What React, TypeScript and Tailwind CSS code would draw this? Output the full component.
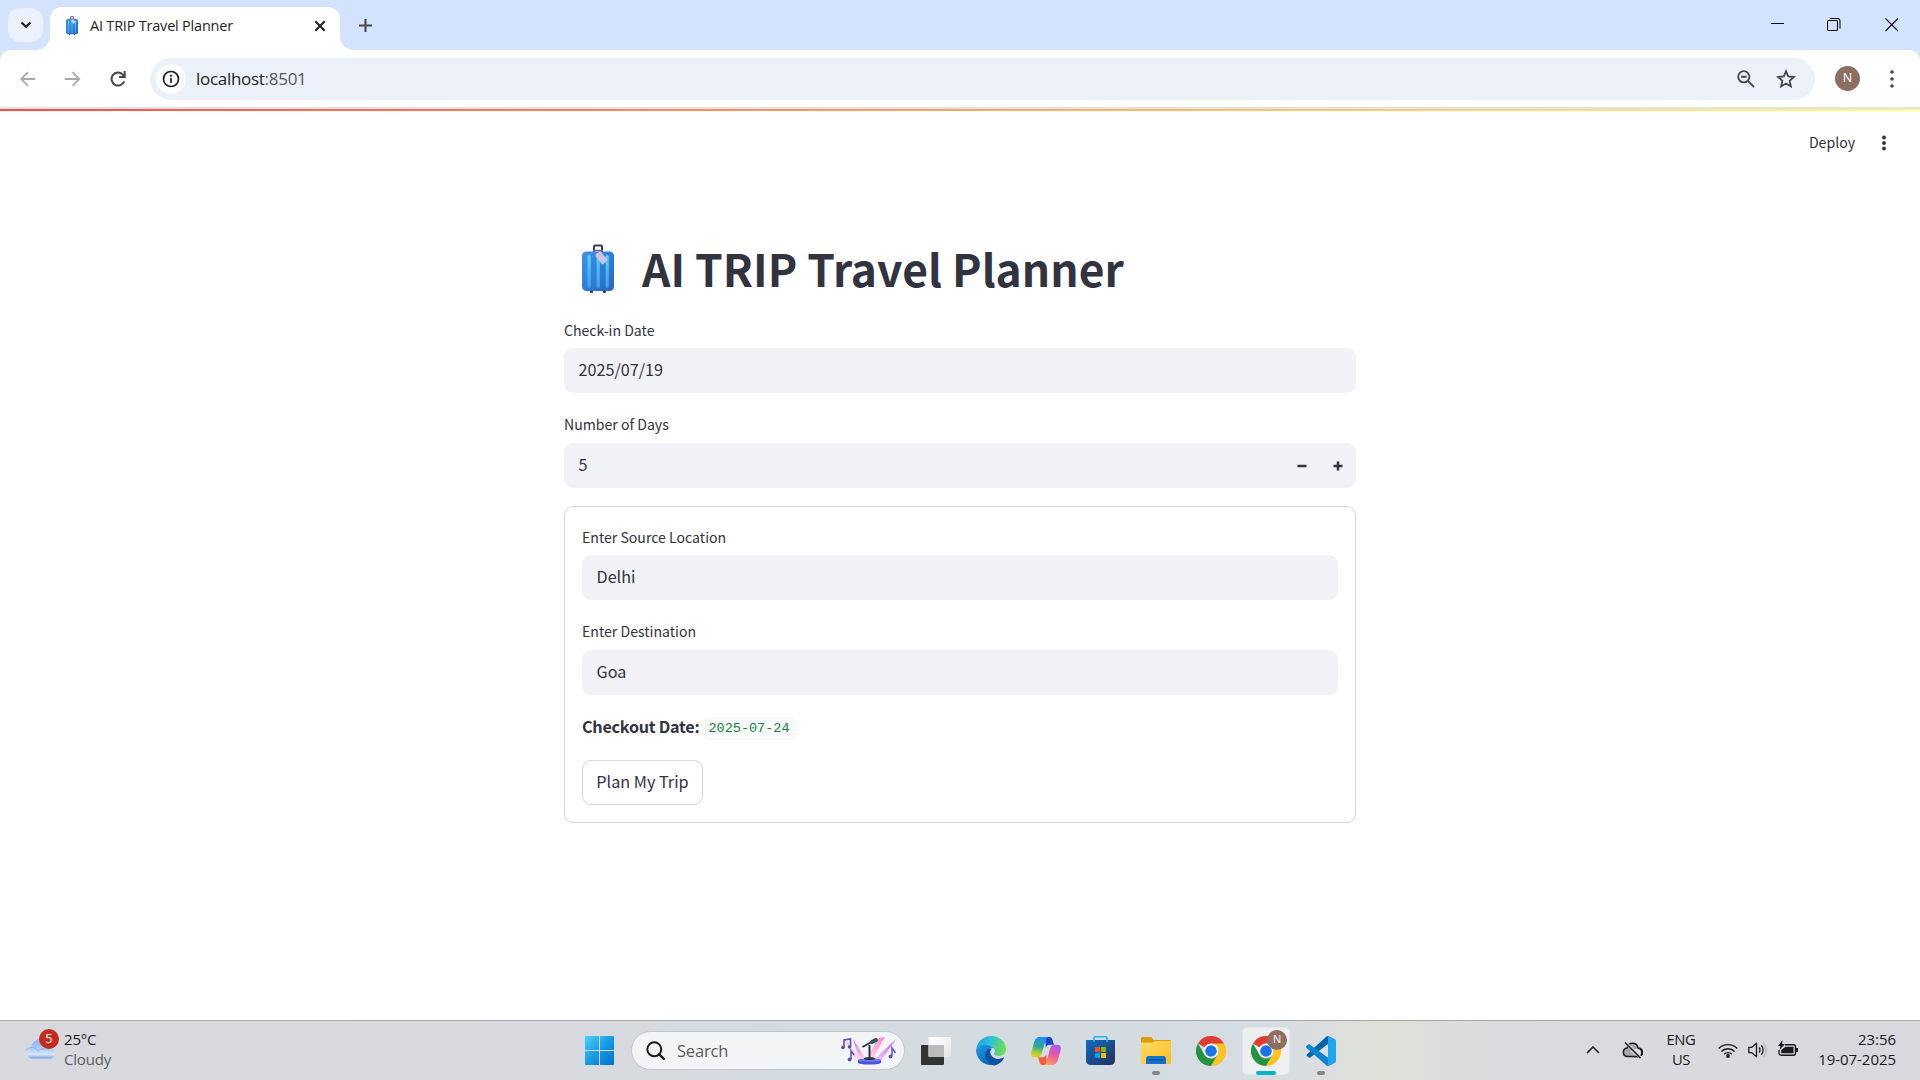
import React from "react";

const ui = "font-['Open_Sans','Noto_Sans',sans-serif]";
const src = "font-['Noto_Sans_CJK_SC',sans-serif]";

function Suitcase({ className }: { className: string }) {
  return (
    <svg viewBox="0 0 32 49" preserveAspectRatio="none" className={className}>
      <defs>
        <linearGradient id="sc" x1="0" y1="0" x2="1" y2="1">
          <stop offset="0" stopColor="#4592e2" />
          <stop offset="0.5" stopColor="#2f7fd6" />
          <stop offset="1" stopColor="#2b62b8" />
        </linearGradient>
        <linearGradient id="sb" x1="0" y1="0" x2="0" y2="1">
          <stop offset="0" stopColor="#52d6fb" />
          <stop offset="1" stopColor="#3f9df0" />
        </linearGradient>
      </defs>
      <path d="M12 8V2.500a1 1 0 0 1 1-1h6a1 1 0 0 1 1 1V8" fill="none" stroke="#433b52" strokeWidth="2" />
      <path d="M11 6.500h10" stroke="#6b6380" strokeWidth="1.500" />
      <rect x="8" y="46" width="3" height="3" rx="1" fill="#35304a" />
      <rect x="21" y="46" width="3" height="3" rx="1" fill="#35304a" />
      <rect x="0" y="7.500" width="32" height="39.500" rx="4.500" fill="url(#sc)" />
      <rect x="5.500" y="11" width="3.200" height="33" rx="1.600" fill="url(#sb)" />
      <rect x="14.600" y="11" width="3.200" height="33" rx="1.600" fill="url(#sb)" />
      <rect x="23.600" y="11" width="3.200" height="33" rx="1.600" fill="url(#sb)" />
      <path d="M13.500 12 14 9.500 18.500 7.500 25 15v1.500l-3.800 3.700H20z" fill="#cdc3da" />
    </svg>
  );
}

function Chrome({ className }: { className: string }) {
  return (
    <svg viewBox="0 0 48 48" className={className}>
      <path d="M24 24 3.200 12A24 24 0 0 1 44.800 12z" fill="#e33b2e" />
      <path d="M44.800 12A24 24 0 0 1 24 48L34.400 30 24 12z" fill="#fcc31e" />
      <path d="M3.200 12A24 24 0 0 0 24 48l10.400-18L24 24 13.600 30z" fill="#229342" />
      <circle cx="24" cy="24" r="12" fill="#fff" />
      <circle cx="24" cy="24" r="9.300" fill="#1a73e8" />
    </svg>
  );
}

function Edge() {
  return (
    <svg viewBox="0 0 30 30" className="size-[30px]">
      <defs>
        <linearGradient id="e1" x1="0" y1="0.3" x2="1" y2="0.5">
          <stop offset="0" stopColor="#1f9fe0" />
          <stop offset="0.45" stopColor="#2dc0d8" />
          <stop offset="1" stopColor="#6fe24e" />
        </linearGradient>
        <linearGradient id="e2" x1="0" y1="0" x2="0.6" y2="1">
          <stop offset="0" stopColor="#1c9be2" />
          <stop offset="1" stopColor="#0d66c2" />
        </linearGradient>
      </defs>
      <path d="M.3 13C1.300 5.500 7.500 0 15 0c8.500 0 15 6 15 13 0 4.500-3.500 7-7.500 7-3 0-4.800-1.200-4.800-2.200 0-.8 1-1.200 1-3C18.700 12 16 9.500 12 9.500 6 9.500 1.500 12.500.3 17z" fill="url(#e1)" />
      <path d="M.1 15C1 11 5 9 9.500 9c4 0 7 1.800 8.500 3.500-3-1.500-6.500.5-6.500 5 0 6 5.500 9.500 9 10.500A15 15 0 0 1 .1 15z" fill="url(#e2)" />
      <path d="M12.700 12.800C9.500 15 8.500 18 9.500 21.500c1.300 4.500 5 7.800 9 8 4-1 7.500-3.500 9.300-7 .3-.8-.2-1.100-.9-.7-5.500 2.700-11 .2-12-4-.5-2 0-3.700 1-4.800-1-.6-2.200-.6-3.200-.2z" fill="#0f539f" />
      <path d="M15.900 12.900c-2.500 1.500-2 5 .4 7 2.300 2 6.500 2.800 10 1.300-4 .4-8.900-1-8.600-3.400 0-.8 1-1.200 1-3 0-1-.8-1.900-2.800-1.900z" fill="#d6dce1" />
    </svg>
  );
}

function Copilot() {
  return (
    <svg viewBox="0 0 30 28" className="h-7 w-[30px]">
      <defs>
        <linearGradient id="c1" x1="0.4" y1="0" x2="0.2" y2="1">
          <stop offset="0" stopColor="#1f8ff0" />
          <stop offset="0.45" stopColor="#2aa98c" />
          <stop offset="0.75" stopColor="#a8cf3a" />
          <stop offset="1" stopColor="#f2c521" />
        </linearGradient>
        <linearGradient id="c2" x1="0.7" y1="0" x2="0.3" y2="1">
          <stop offset="0" stopColor="#a85cf0" />
          <stop offset="0.45" stopColor="#e856a8" />
          <stop offset="1" stopColor="#ff9a5a" />
        </linearGradient>
      </defs>
      <path d="M14 0h4.500c2 0 2.600 1.300 3.200 3.500l1.300 4.200h-4.500c-2 0-3 1-3.700 3z" fill="#1a45c8" />
      <path d="M16 28h-4.500c-2 0-2.600-1.300-3.200-3.500L7 20.300h4.500c2 0 3-1 3.700-3z" fill="#f0603a" />
      <path d="M17.500 0H8.300C5.500 0 4 2.500 3 5.500L.6 14c-1 3.500-.6 6.300 3 6.300H7c2 0 3.200-1.500 3.900-4L14.500 3.500C15.200 1.200 16 0 17.500 0z" fill="url(#c1)" />
      <path d="M12.500 28h9.200c2.800 0 4.300-2.500 5.300-5.500l2.400-8.500c1-3.500.6-6.300-3-6.300H23c-2 0-3.200 1.500-3.900 4L15.500 24.500c-.7 2.300-1.500 3.500-3 3.500z" fill="url(#c2)" />
    </svg>
  );
}

function Store() {
  return (
    <svg viewBox="0 0 29 29" className="mr-px size-[29px]">
      <defs>
        <linearGradient id="st" x1="0" y1="0" x2="1" y2="1">
          <stop offset="0" stopColor="#0c6cc0" />
          <stop offset="1" stopColor="#24305e" />
        </linearGradient>
      </defs>
      <path d="M0 4h29v20.500a4.500 4.500 0 0 1-4.500 4.500h-20A4.500 4.500 0 0 1 0 24.500z" fill="url(#st)" />
      <path d="M8 6V2a1.200 1.200 0 0 1 1.200-1.200h10.600A1.200 1.200 0 0 1 21 2v4" fill="none" stroke="#24b4ea" strokeWidth="1.600" />
      <path d="M9 11h5v5H9z" fill="#f25022" />
      <path d="M15 11h5v5h-5z" fill="#7fba00" />
      <path d="M9 17h5v5H9z" fill="#00a4ef" />
      <path d="M15 17h5v5h-5z" fill="#ffb900" />
    </svg>
  );
}

function Folder() {
  return (
    <svg viewBox="0 0 30 27" className="h-[27px] w-[30px]">
      <defs>
        <linearGradient id="fo" x1="0" y1="0" x2="1" y2="1">
          <stop offset="0" stopColor="#ffdb68" />
          <stop offset="1" stopColor="#fcbe1e" />
        </linearGradient>
      </defs>
      <path d="M0 1.500A1.500 1.500 0 0 1 1.500 0h8c1 0 1.500.4 2 1.200L12.500 3H29a1 1 0 0 1 1 1v5H0z" fill="#e09a08" />
      <path d="M0 5.500h10.500c1 0 1.500-.3 2.200-1L13.500 4H30v21.500a1.500 1.500 0 0 1-1.500 1.500h-27A1.500 1.500 0 0 1 0 25.500z" fill="url(#fo)" />
      <path d="M5 27v-5.500A2.500 2.500 0 0 1 7.500 19h15a2.500 2.500 0 0 1 2.500 2.500V27z" fill="#1173cc" />
      <path d="M8 22.800h14" stroke="#0a4787" strokeWidth="1.200" />
    </svg>
  );
}

function VSCode() {
  return (
    <svg viewBox="0 0 30 30" className="size-[30px]">
      <path d="M29 3.500 22.500.3c-.8-.4-1.400-.2-2 .3L1 18.300c-.6.5-.6 1.200 0 1.700l1.700 1.500c.4.4 1 .4 1.500.1L22 8z" fill="#0065a9" />
      <path d="M29 26.500 22.500 29.700c-.8.4-1.400.2-2-.3L.4 11.700c-.6-.5-.6-1.200 0-1.700l1.700-1.500c.5-.4 1.100-.4 1.600 0L22.500 22z" fill="#0a86d1" />
      <path d="M22.500 29.700c-.8.4-1.600.2-2-.2.700.6 1.500.2 1.500-.8V1.300c0-1-.9-1.400-1.500-.8.500-.5 1.200-.6 2-.2l6.200 3c.8.400 1.300 1.100 1.300 2v19.400c0 .9-.5 1.600-1.300 2z" fill="#22a5f1" />
    </svg>
  );
}

function Stage() {
  return (
    <svg viewBox="0 0 58 28" className="h-7 w-[58px]">
      <defs>
        <linearGradient id="pk" x1="0" y1="0" x2="0" y2="1">
          <stop offset="0" stopColor="#b455f0" />
          <stop offset="1" stopColor="#f9cbea" />
        </linearGradient>
        <linearGradient id="pk2" x1="0" y1="0" x2="0" y2="1">
          <stop offset="0" stopColor="#ff8ed2" />
          <stop offset="1" stopColor="#f6d5ef" />
        </linearGradient>
      </defs>
      <path d="M13 2 26 22h-7z" fill="url(#pk)" opacity="0.800" />
      <path d="M4 1 20 22h-5z" fill="url(#pk2)" opacity="0.800" />
      <path d="M45 0 33 22h-6L38 1z" fill="url(#pk2)" />
      <path d="M56 2 41 24h-8z" fill="url(#pk)" />
      <path d="M4 10.500V3l6.500-1v8" fill="none" stroke="#5a4fb8" strokeWidth="1.600" />
      <circle cx="3" cy="10.500" r="1.800" fill="#5a4fb8" />
      <circle cx="9.500" cy="10" r="1.800" fill="#5a4fb8" />
      <path d="M11 22.500V14l3 4" fill="none" stroke="#5a4fb8" strokeWidth="1.500" />
      <circle cx="9.600" cy="22.500" r="1.900" fill="#5a4fb8" />
      <path d="M52 19V11l3.500 5" fill="none" stroke="#6a4fc8" strokeWidth="1.500" />
      <circle cx="50.500" cy="19.500" r="1.900" fill="#5a4fc0" />
      <path d="M18 23v2.500c0 1.500 5 2 11.500 2s11.500-.5 11.500-2V23z" fill="#4a53d6" />
      <ellipse cx="29.500" cy="23" rx="11.500" ry="1.800" fill="#6b78f0" />
      <ellipse cx="29.500" cy="21.500" rx="5.500" ry="1.500" fill="#27393f" />
      <path d="M29.500 21V8" stroke="#27393f" strokeWidth="2" />
      <path d="m22.500 10 10-5.500" stroke="#27393f" strokeWidth="1.900" />
      <path d="m32 5 3.800-2" stroke="#2d5553" strokeWidth="4" strokeLinecap="round" />
    </svg>
  );
}

function Slot({ children, mark }: { children: React.ReactNode; mark?: boolean }) {
  return (
    <div className="relative flex h-12 w-12 items-center justify-center">
      {children}
      {mark && <span className="absolute bottom-0 left-5 h-1 w-2 rounded-full bg-[#848585]" />}
    </div>
  );
}

function TabStrip() {
  return (
    <div className="flex h-[50px] bg-[#d3e3fd] pl-2">
      <div className="mt-2 flex h-[34px] w-[35px] items-center justify-center rounded-xl bg-[#ebf1fd]">
        <svg viewBox="0 0 12 8" className="h-2 w-3">
          <path d="m1.500 1.500 4.500 4.300 4.500-4.300" fill="none" stroke="#1f1f1f" strokeWidth="2.200" />
        </svg>
      </div>
      <div className="relative ml-[7px] mt-[7px] flex h-[43px] w-[290px] items-center rounded-t-[12px] bg-white pb-[5px] pl-4">
        <svg viewBox="0 0 14 14" className="absolute -left-3.5 bottom-0 size-3.5">
          <path d="M14 0v14H0A14 14 0 0 0 14 0" fill="#fff" />
        </svg>
        <svg viewBox="0 0 14 14" className="absolute -right-3.5 bottom-0 size-3.5">
          <path d="M0 0v14h14A14 14 0 0 1 0 0" fill="#fff" />
        </svg>
        <Suitcase className="mb-px h-[19px] w-3" />
        <span className={`${ui} ml-3 w-[220px] whitespace-nowrap text-[14.500px] tracking-[-0.210px] text-[#1f1f1f]`}>AI TRIP Travel Planner</span>
        <svg viewBox="0 0 12 12" className="mb-px ml-1 size-3">
          <path d="m1.300 1.300 9.400 9.400m0-9.400-9.400 9.400" stroke="#1f1f1f" strokeWidth="2" />
        </svg>
      </div>
      <svg viewBox="0 0 13 13" className="ml-[19px] mt-[19px] size-[13px]">
        <path d="M6.500 0v13M0 6.500h13" stroke="#474747" strokeWidth="2" />
      </svg>
      <div className="ml-auto mr-[21px] mt-[18px] flex h-[14px]">
        <svg viewBox="0 0 14 14" className="size-3.5">
          <path d="M0 5.500h13" stroke="#111" />
        </svg>
        <svg viewBox="0 0 14 14" className="ml-[42px] size-3.5">
          <path d="M.5 3.500a1 1 0 0 1 1-1h8a1 1 0 0 1 1 1v8a1 1 0 0 1-1 1h-8a1 1 0 0 1-1-1zM3 .5h7.500a2.500 2.500 0 0 1 2.500 2.500v7.500" fill="none" stroke="#111" strokeWidth="1.100" />
        </svg>
        <svg viewBox="0 0 14 14" className="ml-11 size-3.5">
          <path d="m.5.500 12.500 12.500m0-12.500L.5 13" stroke="#111" strokeWidth="1.100" />
        </svg>
      </div>
    </div>
  );
}

function Toolbar() {
  return (
    <div className="bg-[#d3e3fd]">
      <div className="flex h-[57px] items-center rounded-t-[10px] bg-white pl-5">
        <svg viewBox="0 0 16 16" className="size-4">
          <path d="M15 8H1.500M8 1.200 1.300 8 8 14.800" fill="none" stroke="#a9a9a9" strokeWidth="1.800" />
        </svg>
        <svg viewBox="0 0 16 16" className="ml-[29px] size-4">
          <path d="M0 8h14M7.500 1.200 14.200 8l-6.700 6.800" fill="none" stroke="#a9a9a9" strokeWidth="1.800" />
        </svg>
        <svg viewBox="0 0 16 16" className="ml-[29px] size-4">
          <path d="M14.200 10.300A6.500 6.500 0 1 1 12.700 3.500L14.500 5.500M14.700 0v5.900H9" fill="none" stroke="#474747" strokeWidth="2" />
        </svg>
        <div className="ml-6 flex h-[42px] w-[1665px] items-center rounded-full bg-[#ecf0f9] pl-1.5">
          <div className="flex size-[30px] items-center justify-center rounded-full bg-white">
            <svg viewBox="0 0 18 18" className="size-[18px]">
              <circle cx="9" cy="9" r="7.500" fill="none" stroke="#1f1f1f" strokeWidth="1.700" />
              <path d="M9 8v5M9 4.800v1.900" stroke="#1f1f1f" strokeWidth="1.700" />
            </svg>
          </div>
          <span className={`${ui} ml-[10px] mt-px text-[17px] tracking-[-0.290px] text-[#1f1f1f]`}>
            localhost<span className="text-[#55585d]">:8501</span>
          </span>
          <svg viewBox="0 0 18 18" className="ml-auto size-[18px]">
            <circle cx="6.800" cy="6.800" r="5.600" fill="none" stroke="#474747" strokeWidth="1.800" />
            <path d="m10.800 10.800 6.200 6.200M4 6.800h5.600" stroke="#474747" strokeWidth="1.900" />
          </svg>
          <svg viewBox="0 0 20 20" className="ml-[21px] mr-[19px] size-5">
            <path d="m10 2.200 2.200 5.300 5.700.5-4.300 3.800 1.300 5.600L10 14.500l-4.900 2.900 1.300-5.600L2.100 8l5.700-.5z" fill="none" stroke="#474747" strokeWidth="1.800" />
          </svg>
        </div>
        <div className={`${ui} ml-5 flex size-[25px] items-center justify-center rounded-full bg-[#8d6e63] text-[12.500px] text-white`}>N</div>
        <svg viewBox="0 0 4 18" className="ml-[30px] h-[18px] w-1">
          <path d="M2 .200a1.800 1.800 0 1 1 0 3.600a1.800 1.800 0 1 1 0-3.600M2 7.200a1.800 1.800 0 1 1 0 3.600a1.800 1.800 0 1 1 0-3.600M2 14.200a1.800 1.800 0 1 1 0 3.600a1.800 1.800 0 1 1 0-3.600" fill="#474747" />
        </svg>
      </div>
    </div>
  );
}

function Label({ children }: { children: string }) {
  return <div className="flex h-[23px] items-center whitespace-nowrap pb-0.5 text-[14.100px] leading-[21px]">{children}</div>;
}

function Field({ children, controls }: { children: string; controls?: React.ReactNode }) {
  return (
    <div className="flex h-[45px] items-center rounded-[9px] bg-[#f0f2f6] pl-[14.500px] text-[16.200px]">
      <span className="mb-0.5">{children}</span>
      {controls}
    </div>
  );
}

function PageContent() {
  return (
    <main className={`${src} flex h-[909px] flex-col text-[#31333f]`}>
      <div className="flex h-16 items-center justify-end pr-[34px]">
        <span className="text-[14.100px]">Deploy</span>
        <svg viewBox="0 0 4 16" className="ml-[27px] h-4 w-1">
          <circle cx="2" cy="2.500" r="1.900" fill="#31333f" />
          <circle cx="2" cy="8" r="1.900" fill="#31333f" />
          <circle cx="2" cy="13.500" r="1.900" fill="#31333f" />
        </svg>
      </div>
      <div className="mx-auto flex w-[792px] flex-col">
        <h1 className="mt-[60px] flex h-[66px] items-center pl-[18px]">
          <Suitcase className="h-[49px] w-8" />
          <span className="ml-7 whitespace-nowrap text-[44.350px] font-bold leading-none">AI TRIP Travel Planner</span>
        </h1>
        <div className="mt-[19px]"><Label>Check-in Date</Label></div>
        <div className="mt-[5px]"><Field>2025/07/19</Field></div>
        <div className="mt-[21px]"><Label>Number of Days</Label></div>
        <div className="mt-1.5">
          <Field
            controls={
              <>
                <svg viewBox="0 0 10 10" className="ml-auto size-2.5">
                  <path d="M.5 5h9" stroke="#31333f" strokeWidth="2.500" />
                </svg>
                <svg viewBox="0 0 10 10" className="ml-[26px] mr-[13.500px] size-2.5">
                  <path d="M.5 5h9M5 .5v9" stroke="#31333f" strokeWidth="2.500" />
                </svg>
              </>
            }
          >
            5
          </Field>
        </div>
        <section className="mt-[18px] flex h-[317px] flex-col rounded-[9px] border border-[#d6d6d9] px-[17px] pt-5">
          <Label>Enter Source Location</Label>
          <div className="mt-[5px]"><Field>Delhi</Field></div>
          <div className="mt-[21px]"><Label>Enter Destination</Label></div>
          <div className="mt-1.5"><Field>Goa</Field></div>
          <div className="mt-5 flex h-[26px] items-center">
            <span className="mb-1 text-[16.200px] font-bold tracking-[-0.260px]">Checkout Date:</span>
            <code className="ml-[3px] flex h-[23px] items-center rounded-[5px] bg-[#f8f9fb] px-1.5 pt-[3px] font-['Liberation_Mono',monospace] text-[13.500px] text-[#158237]">2025-07-24</code>
          </div>
          <button className="mt-[19px] h-[45px] w-[121px] rounded-[9px] border border-[#d6d6d9] bg-white pb-0.5 text-[16.200px]">Plan My Trip</button>
        </section>
      </div>
    </main>
  );
}

function Taskbar() {
  return (
    <footer className={`${ui} flex h-[60px] items-center border-t border-[#a9aaac] bg-[linear-gradient(90deg,#d8d9de_0%,#d8dadf_28%,#d4dce1_42%,#d4dce1_60%,#d6dce3_66%,#dfe0d7_72%,#d9dbde_78%,#d7d9df_100%)]`}>
      <div className="mb-1 flex w-[585px] items-center pl-[25px]">
        <div className="relative">
          <svg viewBox="0 0 30 20" className="h-5 w-[30px]">
            <defs>
              <linearGradient id="cl" x1="0" y1="0" x2="0" y2="1">
                <stop offset="0" stopColor="#86b3f3" />
                <stop offset="0.450" stopColor="#a9caf8" />
                <stop offset="0.800" stopColor="#d6e6fb" />
                <stop offset="1" stopColor="#6f9fe8" />
              </linearGradient>
            </defs>
            <path d="M6 19.500a6 6 0 0 1 0-11C7 3 11 0 16 0c5.500 0 9 4 9.500 8.500 3 .5 4.500 2.500 4.500 5.500s-2 5.500-5 5.500z" fill="url(#cl)" />
            <path d="M1 11c4-4 9-3 12 1 4-3 8-3 11-1" fill="none" stroke="#86b0f0" strokeWidth="1" />
          </svg>
          <span className="absolute -top-[10px] left-3.5 flex size-5 items-center justify-center rounded-full bg-[#c42b1c] text-[13px] text-white">5</span>
        </div>
        <div className="ml-[9px] text-[15px] leading-5 tracking-[-0.200px]">
          <div className="text-[#1b1b1b]">25°C</div>
          <div className="text-[#5d5d60]">Cloudy</div>
        </div>
      </div>
      <svg viewBox="0 0 29 29" className="size-[29px]">
        <defs>
          <linearGradient id="win" x1="0" y1="0" x2="1" y2="1">
            <stop offset="0" stopColor="#4fd0fb" />
            <stop offset="0.500" stopColor="#179be4" />
            <stop offset="1" stopColor="#0570cc" />
          </linearGradient>
        </defs>
        <path d="M1 0h13v14H0V1a1 1 0 0 1 1-1M15 0h13a1 1 0 0 1 1 1v13H15zM0 15h14v14H1a1 1 0 0 1-1-1zM15 15h14v13a1 1 0 0 1-1 1H15z" fill="url(#win)" />
      </svg>
      <div className="ml-[17px] flex h-[39px] w-[274px] items-center rounded-full border border-[#c3c7cb] bg-[#f3f4f6] pl-[13px]">
        <svg viewBox="0 0 19 19" className="ml-px size-[19px]">
          <circle cx="8.300" cy="8.300" r="7" fill="none" stroke="#1b1b1b" strokeWidth="2" />
          <path d="m13.300 13.300 4.500 4.500" stroke="#1b1b1b" strokeWidth="2.400" strokeLinecap="round" />
        </svg>
        <span className="ml-3 mt-px text-[16.500px] tracking-[-0.200px] text-[#5a5b5d]">Search</span>
        <span className="ml-auto mr-1.5"><Stage /></span>
      </div>
      <div className="ml-[7px] flex gap-[7px]">
        <Slot>
          <svg viewBox="0 0 30 28" className="mr-px h-7 w-[30px]">
            <defs>
              <linearGradient id="tv" x1="0" y1="0" x2="1" y2="1">
                <stop offset="0" stopColor="#fff" />
                <stop offset="1" stopColor="#e6e6e6" />
              </linearGradient>
            </defs>
            <rect y="8" width="23" height="20" rx="1" fill="#333432" />
            <rect x="7.500" width="22.500" height="20" rx="1" fill="url(#tv)" />
            <path d="M7.500 8H23v12H7.500z" fill="#b9babb" />
          </svg>
        </Slot>
        <Slot><Edge /></Slot>
        <Slot><Copilot /></Slot>
        <Slot><Store /></Slot>
        <Slot mark><Folder /></Slot>
        <Slot><Chrome className="size-[30px]" /></Slot>
        <div className="relative flex size-12 items-center justify-center rounded-[5px] border border-[#e4e7ea] bg-[#edeff1]">
          <Chrome className="size-[30px]" />
          <span className="absolute right-[2px] top-[2px] flex size-5 items-center justify-center rounded-full bg-[#8d6e63] text-[11px] font-semibold text-[#e8dcd8]">N</span>
          <span className="absolute -bottom-px left-[13px] h-1 w-5 rounded-full bg-[#00b7c3]" />
        </div>
        <Slot mark><VSCode /></Slot>
      </div>
      <div className="ml-auto flex h-full items-center pr-6 text-[#1b1b1b]">
        <svg viewBox="0 0 14 8" className="mb-px h-2 w-3.5">
          <path d="m1 7 6-6 6 6" fill="none" stroke="#1b1b1b" strokeWidth="1.600" />
        </svg>
        <svg viewBox="0 0 21 17" className="mb-px ml-[22px] h-[17px] w-[21px]">
          <path d="M5 14.500a4.300 4.300 0 0 1 0-8.500C6 2.800 8 1.200 10.500 1.200c3 0 5 2 5.500 4.800a4.200 4.200 0 0 1 .5 8.500z" fill="#a8a9ab" stroke="#1b1b1b" strokeWidth="1.500" />
          <path d="m8.500 9 7-2.500c3 0 4.500 2 4.500 4s-1.500 3.500-3.500 3.500H13z" fill="#dcdde0" />
          <path d="M16 6.200a4.200 4.200 0 0 1 .5 8.300H12" fill="none" stroke="#1b1b1b" strokeWidth="1.500" />
          <path d="M3.500.500 19 16" stroke="#dcdde0" strokeWidth="3" />
          <path d="M3 .500 18.500 16" stroke="#1b1b1b" strokeWidth="1.500" />
        </svg>
        <div className="mb-[3px] ml-[23px] w-[30px] text-center text-[14.800px] leading-5 tracking-[-0.400px]">
          <div>ENG</div>
          <div>US</div>
        </div>
        <svg viewBox="0 0 20 15" className="mb-px ml-[22px] h-[15px] w-5">
          <path d="M.7 5.500a13 13 0 0 1 18.600 0M3.400 8.500a9.200 9.200 0 0 1 13.200 0M6.200 11.200a5.400 5.400 0 0 1 7.600 0" fill="none" stroke="#1b1b1b" strokeWidth="1.400" />
          <circle cx="10" cy="13" r="1.900" fill="#1b1b1b" />
        </svg>
        <svg viewBox="0 0 20 16" className="mb-px ml-[10px] h-4 w-5">
          <path d="M.8 5.300h3L8.500 1.200v13.600L3.800 10.700h-3z" fill="none" stroke="#1b1b1b" strokeWidth="1.300" strokeLinejoin="round" />
          <path d="M11 5.500a3.500 3.500 0 0 1 0 5M13.200 3.300a6.600 6.600 0 0 1 0 9.400" fill="none" stroke="#1b1b1b" strokeWidth="1.300" />
          <path d="M15.500 1.200a9.700 9.700 0 0 1 0 13.600" fill="none" stroke="#b4b5b8" strokeWidth="1.300" />
        </svg>
        <svg viewBox="0 0 21 17" className="mb-1 ml-[10px] h-[17px] w-[21px]">
          <path d="M7 4.800h8.500a2 2 0 0 1 2 2v6.400a2 2 0 0 1-2 2H3a2 2 0 0 1-2-2V10" fill="none" stroke="#1b1b1b" strokeWidth="1.400" />
          <path d="M7.500 6.800h8v6.500H3.200V10z" fill="#1b1b1b" />
          <path d="M18 8h2v4h-2zM4.500 0 0 6h2.500L1.500 10 7 4H4z" fill="#1b1b1b" />
        </svg>
        <div className="mb-1 ml-[17px] w-[80px] whitespace-nowrap text-right text-[15px] leading-5 tracking-[-0.040px]">
          <div>23:56</div>
          <div>19-07-2025</div>
        </div>
      </div>
    </footer>
  );
}

export default function App() {
  return (
    <div className="flex h-[1080px] w-[1920px] flex-col overflow-hidden bg-white">
      <TabStrip />
      <Toolbar />
      <div className="h-0.5 shrink-0 bg-[#e1e3e1]" />
      <div className="h-0.5 shrink-0 bg-[linear-gradient(90deg,#ff4b4b,#fffd80)]" />
      <PageContent />
      <Taskbar />
    </div>
  );
}
